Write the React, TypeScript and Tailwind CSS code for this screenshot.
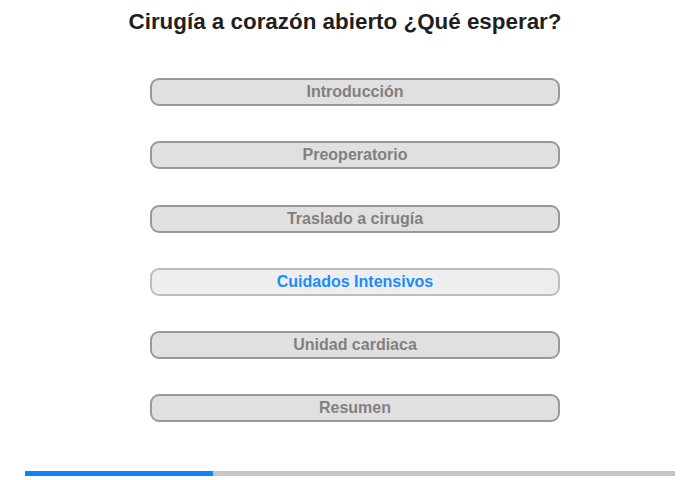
import React from 'react';

const sections = [
  'Introducción',
  'Preoperatorio',
  'Traslado a cirugía',
  'Cuidados Intensivos',
  'Unidad cardiaca',
  'Resumen',
];

const ACTIVE = 3;

export default function App() {
  return (
    <div className="w-[700px] h-[480px] bg-white flex flex-col font-['Liberation_Sans',Arial,sans-serif]">
      <h1 className="mt-[9px] h-[26px] pr-[10px] text-center text-[22.4px] leading-[26px] font-bold text-[#1f1f1f]">
        Cirugía a corazón abierto ¿Qué esperar?
      </h1>

      {/* Section buttons */}
      <div className="mt-[43px] ml-[150px] flex flex-col gap-[35.25px]">
        {sections.map((label, i) => (
          <button
            key={label}
            type="button"
            className={
              i === ACTIVE
                ? 'w-[410px] h-[28px] rounded-[9px] border-2 border-[#bdbdbd] bg-[#eeeeee] text-[16px] font-bold leading-none text-[#1a8cff]'
                : 'w-[410px] h-[28px] rounded-[9px] border-2 border-[#999999] bg-[#e0e0e0] text-[16px] font-bold leading-none text-[#808080]'
            }
          >
            {label}
          </button>
        ))}
      </div>

      {/* Progress */}
      <div className="mt-auto mb-[4px] mx-[25px] h-[5px] flex bg-[#c6c6c6]">
        <div className="w-[188px] bg-[#0a84ff]" />
      </div>
    </div>
  );
}
